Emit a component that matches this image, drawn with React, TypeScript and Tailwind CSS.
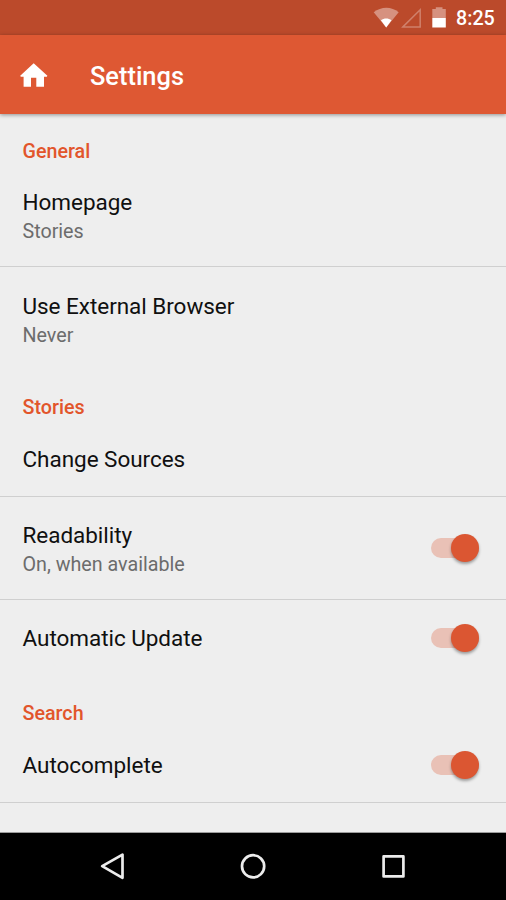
import { useState } from 'react'
import clsx from 'clsx'

interface Preference {
  title: string
  summary?: string
  checked?: boolean
  divider?: boolean
}

interface Category {
  name: string
  headerClass: string
  items: Preference[]
}

const categories: Category[] = [
  {
    name: 'General',
    headerClass: 'h-[50px] pt-[26px]',
    items: [
      { title: 'Homepage', summary: 'Stories', divider: true },
      { title: 'Use External Browser', summary: 'Never' },
    ],
  },
  {
    name: 'Stories',
    headerClass: 'h-[52px] pt-[26px]',
    items: [
      { title: 'Change Sources', divider: true },
      { title: 'Readability', summary: 'On, when available', checked: true, divider: true },
      { title: 'Automatic Update', checked: true },
    ],
  },
  {
    name: 'Search',
    headerClass: 'h-[53px] pt-[27px]',
    items: [{ title: 'Autocomplete', checked: true, divider: true }],
  },
]

function StatusBar() {
  return (
    <div className="flex h-[35px] shrink-0 items-center justify-end bg-[#bb4a2b] pr-[11px]">
      <svg width="82" height="35" viewBox="0 0 82 35" className="mr-[2px]">
        {/* wifi */}
        <path d="M1.7 12.2C9.2 6.2 19.5 6.2 26.7 12.2L14.2 27.6Z" fill="#d6917f" />
        <path d="M8.9 20.3C12.1 18 16.3 18 19.5 20.3L14.2 27.6Z" fill="#fff" />
        {/* signal */}
        <path d="M30.9 26.9L48.2 9.8V26.9Z" fill="none" stroke="#cf806b" strokeWidth="1.5" />
        {/* battery */}
        <path d="M60.3 9h3.5V7.3h6.7V9h3.3v9H60.3Z" fill="#d6917f" />
        <path d="M60.3 18h13.5v9.5H60.3Z" fill="#fff" />
      </svg>
      <span className="w-[39px] pt-[2px] text-[19.7px] leading-6 font-medium whitespace-nowrap text-white">8:25</span>
    </div>
  )
}

function Toolbar() {
  return (
    <header className="z-10 flex h-[79px] shrink-0 items-center bg-[#de5833] pl-[20px] text-white shadow-[0_1px_4px_rgba(0,0,0,0.4)]">
      <svg width="28" height="24" viewBox="0 0 28 24" fill="currentColor">
        <path d="M13.7 0.2L27.4 12.8L26.8 13.8H24V23.8H16.3V14.8H11V23.8H3.6V13.8H0.8L0.2 12.8Z" />
      </svg>
      <h1 className="ml-[42px] pt-[2px] text-[25.4px] leading-8 font-medium">Settings</h1>
    </header>
  )
}

function Toggle({ label, initial }: { label: string; initial: boolean }) {
  const [on, setOn] = useState(initial)

  return (
    <button
      type="button"
      role="switch"
      aria-checked={on}
      aria-label={label}
      onClick={() => setOn(!on)}
      className={clsx(
        'flex h-5 w-[47.5px] items-center rounded-full',
        on ? 'justify-end bg-[#e9c1b6]' : 'justify-start bg-[#b9b9b9]'
      )}
    >
      <span
        className={clsx(
          'size-[28px] shrink-0 rounded-full shadow-[0_2px_3px_rgba(0,0,0,0.35)]',
          on ? 'bg-[#db5632]' : 'bg-[#f1f1f1]'
        )}
      />
    </button>
  )
}

function PreferenceRow({ title, summary, checked, divider }: Preference) {
  return (
    <li
      className={clsx(
        'flex items-center justify-between pr-[27.5px] pl-[22.5px]',
        summary ? 'h-[103px]' : 'h-[75px]',
        divider && 'border-b border-[#cfcfcf]'
      )}
    >
      <div className={clsx(summary && 'pt-[3px]')}>
        <p className="text-[22.5px] leading-[30px] tracking-[-0.04px] text-[#101010]">{title}</p>
        {summary && <p className="mt-px text-[19.7px] leading-[28px] text-[#6c6c6c]">{summary}</p>}
      </div>
      {checked !== undefined && <Toggle label={title} initial={checked} />}
    </li>
  )
}

function NavigationBar() {
  return (
    <nav className="flex h-[67px] shrink-0 items-center justify-center gap-[112px] bg-black">
      <svg width="28" height="28" viewBox="0 0 28 28" fill="none" stroke="#ececec" strokeWidth="2.7" strokeLinejoin="round">
        <path d="M3.2 13.2L23.5 1.6V24.8Z" />
      </svg>
      <svg width="28" height="28" viewBox="0 0 28 28" fill="none" stroke="#ececec" strokeWidth="2.7">
        <circle cx="14.1" cy="13.3" r="11.1" />
      </svg>
      <svg width="28" height="28" viewBox="0 0 28 28" fill="none" stroke="#ececec" strokeWidth="2.7" strokeLinejoin="round">
        <path d="M4.6 3.4H24.4V23.4H4.6Z" />
      </svg>
    </nav>
  )
}

export default function App() {
  return (
    <div className="flex h-[900px] w-[506px] flex-col overflow-hidden bg-[#eeeeee] font-['Roboto',sans-serif]">
      <StatusBar />
      <Toolbar />
      <main className="min-h-0 flex-1 overflow-hidden border-b border-[#9c9c9c]">
        {categories.map((category) => (
          <section key={category.name}>
            <h2
              className={clsx(
                'pl-[22.5px] text-[19.7px] leading-6 font-medium text-[#e2552b]',
                category.headerClass
              )}
            >
              {category.name}
            </h2>
            <ul>
              {category.items.map((item) => (
                <PreferenceRow key={item.title} {...item} />
              ))}
            </ul>
          </section>
        ))}
      </main>
      <NavigationBar />
    </div>
  )
}
